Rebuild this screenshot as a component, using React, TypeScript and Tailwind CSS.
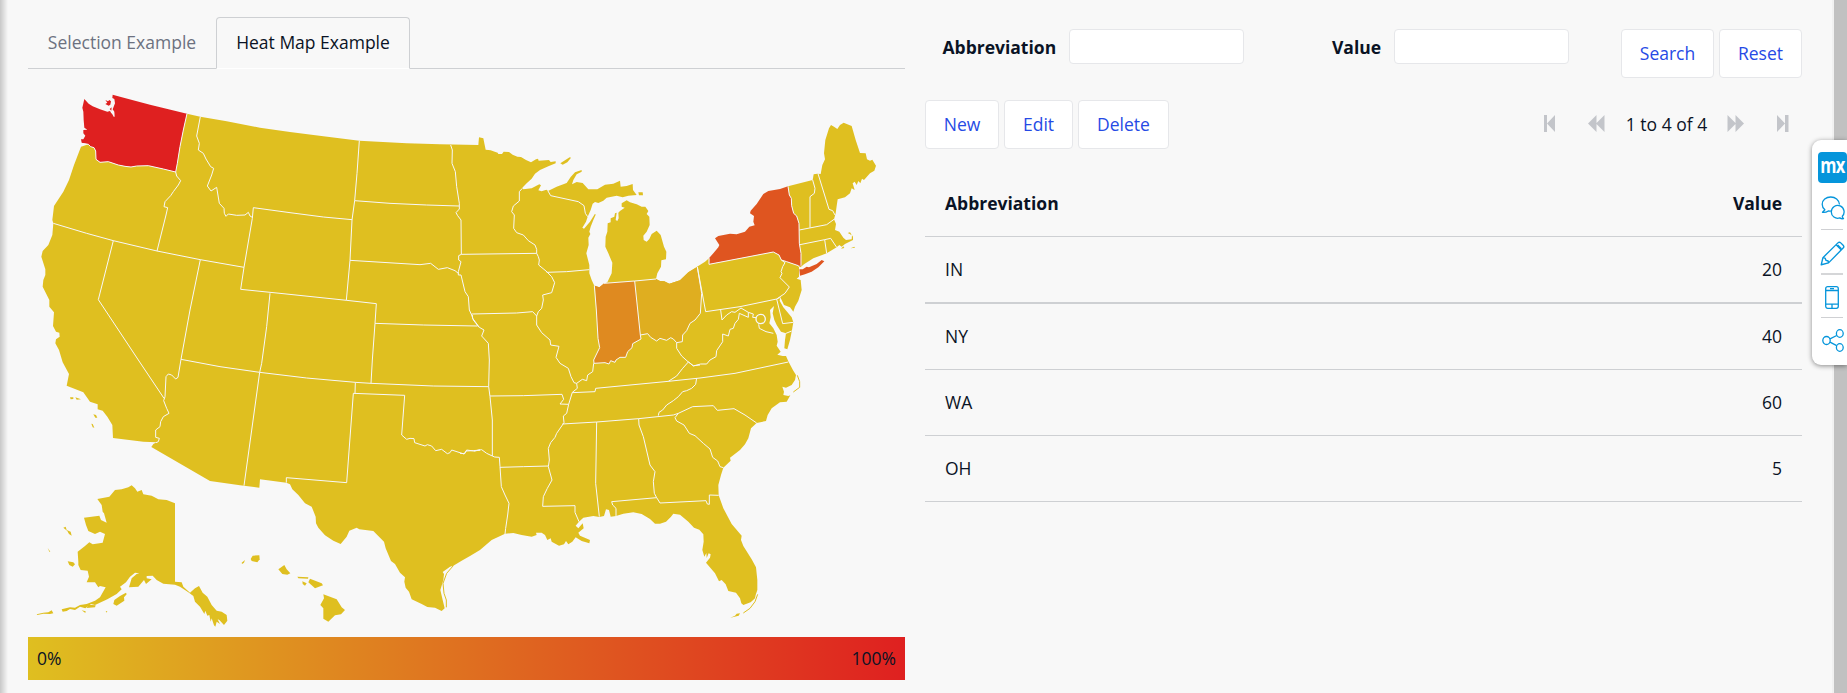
import React from "react";

/* Every map tile is 240x270 px; its points are written in thirds of a pixel. */
const at = (col: number, row: number, pts: string) =>
  pts
    .trim()
    .split(/\s+/)
    .map((p) => {
      const [x, y] = p.split(",").map(Number);
      return `${x + col * 660},${y + row * 810}`;
    })
    .join(" ");

const mainland = [
  at(0, 0, "501,101 541,110 620,124 720,143"),
  at(1, 0, "150,156 250,169 358,182 500,190 600,193 715,195"),
  at(
    2,
    0,
    `57,172 70,175 73,190 77,209 92,211 100,214 113,218 115,222 126,222 131,215 147,216 158,224 172,230 183,231 198,240 213,247 228,238 234,236 236,242 267,240 272,246 287,244 287,250 265,259 240,270 225,281 215,296 200,310 187,323 190,328 215,325 238,313 243,316 235,331 245,334 259,329 264,333
    290,320 320,309 332,291 345,277 365,270 365,275 350,283 340,300 336,313 350,306 368,309 385,328 412,328 435,314 460,311 480,302 482,320 500,318 518,312 519,330 530,345 505,347 488,352 470,347 440,353 430,362 415,369 405,366 398,371 392,390 383,410
    378,425 367,443 372,446 390,425 405,401 407,404 400,420 392,440 388,455 391,462 385,473 386,495 379,520 388,555 388,580 395,600 403,617 418,622 432,612 442,607 455,580 457,548 445,520 436,500 437,470 442,455 443,430 452,427 452,415 463,410 465,400 470,398 467,420 472,423 476,415 475,398 480,393 494,383 485,380 485,370 500,361 510,367 530,373 545,380 556,380 565,393 560,402 568,410 569,435 560,455 550,467 551,480 560,485 568,477 575,462 590,452 602,465 612,500 619,515 618,538 604,541 603,560 592,580 588,597 600,603 613,604 628,611 660,601 685,577`
  ),
  at(
    3,
    0,
    `50,561 75,545 87,535 87,553 280,516 297,525 304,540 355,557 363,557 363,520 358,490 357,430 350,408 341,400 335,377 334,355 328,345 324,319 398,300 401,283 412,281 422,282 427,255 435,238 432,220 436,180 447,145 453,135 462,140 472,147 480,135 491,128 515,138 527,180 540,219 557,220 561,238 570,242 577,239 588,257 583,272 570,280 552,300 546,296 541,310 535,303 530,315 524,305 518,310 524,330 515,325 510,340 495,352 473,358 470,378 467,400 462,418 468,432 465,450 478,455 490,473 498,480 515,478 516,465 503,459 510,457 519,470 519,480 495,492 485,500 478,495 470,502 440,520 400,535 372,553 363,560
    357,563 357,590 350,596 362,600 365,630 355,662 345,680 340,695 330,682 312,675 301,652 299,662 310,682 325,700 335,712 340,727 336,750 330,780 322,808 313,805 315,780 318,760 303,755 290,735 283,720 278,700 282,678 270,690 272,712 268,730 280,745 290,765 293,785 290,797 302,815 292,824 308,828`
  ),
  at(
    3,
    1,
    `318,18 326,36 340,62 348,75 345,90 335,105 318,113 307,110 312,125 310,135 325,138 331,136 320,155 300,157 275,175 263,195 258,213 230,219 213,235 205,265 195,283 180,300 150,323 152,332 130,353 123,375 115,405 116,436 130,475 155,522 185,557 183,570 190,588 215,628 228,652 232,690 232,720 227,735 225,745 212,757 190,765 184,760 180,745 168,728 145,723 137,703 125,690 117,694 105,670 78,638 90,623 92,613 86,610 80,624 79,609 73,620 67,600 71,575 70,553 58,539 42,533 25,515`
  ),
  at(
    2,
    1,
    `660,494 640,491 633,500 618,515 600,521 585,521 570,507 545,492 520,487 490,491 468,498 452,500 447,480 438,478 432,498 418,501 400,498 370,503 357,515 347,527 355,535 368,520 371,535 355,548 360,557 390,570 388,580 365,573 347,562 337,575 325,583 318,573 312,583 297,587 275,575 272,565 262,570 255,555 245,548 228,548 230,555 215,560 185,555 160,549 135,551 95,570 60,600`
  ),
  at(
    1,
    1,
    `690,618 665,632 640,647 630,650 608,666 612,672 610,690 601,720 608,750 614,775 605,783 585,773 562,771 545,762 515,748 507,725 497,713 493,695 495,682 480,668 465,642 453,633 437,595 432,575 400,543 358,538 350,533 328,542 320,560 302,582 280,572 255,556 235,533 228,520 227,500 215,470 195,460 175,435 157,418 150,403 139,398 60,388 58,413 0,406`
  ),
  at(
    0,
    1,
    `570,393 394,291 400,282 410,277 370,275 279,264 277,225 262,200 248,182 233,178 233,163 210,155 190,127 165,117 140,107 147,72 128,37 117,0`
  ),
  at(
    0,
    0,
    `106,790 108,778 119,770 118,758 108,755 99,738 102,697 88,680 88,660 68,620 70,600 76,585 76,568 64,530 68,513 85,495 97,465 100,430 97,420 102,378 130,335 147,300 162,255 183,200 205,193 212,200 222,203 227,213 228,238 240,247 265,245 295,255 315,259 333,261 350,258 385,257 430,267 467,276 472,250 480,200 490,150`
  ),
].join(" ");

const islands = [
  // Alaska
  at(
    0,
    1,
    `335,406 345,415 352,425 365,420 370,433 395,437 415,448 440,450 465,460 465,695 485,697 490,710 510,728 525,715 537,708 548,728 562,740 575,765 590,782 605,785 620,795 622,812 612,825 598,810 593,808 600,822 590,815 586,830 582,826 575,805 572,815 568,795 562,797 556,782 553,792 540,770 525,755 520,738 505,727 480,710 465,704 430,701 410,690 398,677 380,678 380,685 395,688 378,702 372,690 355,710 327,712 335,685 350,672 358,670 345,668 330,680 318,697 300,710 305,718 290,732 262,748 225,765 213,762 196,775 180,770 165,780 150,777 140,783 128,785 125,778 150,772 165,773 180,765 200,762 225,752 240,742 257,712 240,708 235,712 225,697 200,697 207,680 203,662 182,660 175,645 175,635 173,605 195,588 208,577 218,583 248,578 255,552 240,545 225,552 205,543 198,525 192,503 215,500 238,497 243,510 260,518 252,490 248,485 245,465 232,447 268,440 285,420 305,418 325,412`
  ),
  at(0, 1, "283,750 300,738 318,728 320,733 312,742 313,752 290,767 280,762"),
  at(0, 1, "130,533 137,530 140,540 152,545 155,557 147,552 142,543"),
  at(0, 1, "83,594 91,605 88,605"),
  at(0, 1, "143,634 160,637 165,643 158,650 148,645"),
  at(0, 1, "50,793 70,788 85,787 95,781 100,790 90,792 70,791 52,795"),
  at(0, 1, "185,781 197,784 196,789"),
  at(0, 1, "205,764 227,766 225,772 200,774"),
  at(0, 1, "257,783 262,784 260,788"),
  // California
  at(0, 1, "150,142 160,142 160,147 152,148"),
  at(0, 1, "166,142 183,148 170,149"),
  at(0, 1, "220,193 228,195 232,203 226,203"),
  at(0, 1, "214,221 218,222 223,233 218,232"),
  // Hawaii
  at(1, 1, "32,627 38,617 58,616 59,628 52,637 35,633"),
  at(1, 1, "5,638 15,630 12,638 6,642"),
  at(1, 1, "115,658 133,645 140,658 151,670 142,674 127,672"),
  at(1, 1, "172,680 205,682 204,686 175,685"),
  at(1, 1, "187,694 200,700 195,707 188,702"),
  at(1, 1, "210,686 245,700 249,706 225,715 205,697"),
  at(1, 1, "250,733 290,748 305,772 315,780 303,793 285,796 265,815 250,806 250,775 241,765 252,745"),
  // Great Lakes
  at(2, 0, "301,250 329,232 333,233 322,247 308,254"),
  at(2, 0, "535,337 548,337 549,346 537,346"),
  // Florida and New England
  at(3, 1, "151,803 165,797 170,791 180,790 176,797"),
  at(3, 0, "483,506 490,499 493,504"),
  at(3, 0, "512,505 523,500 525,503"),
];

const sandbars = [
  at(3, 1, "352,76 359,95 359,112 340,126"),
  at(1, 1, "640,647 620,670 609,700 612,730 619,750 619,772"),
  at(3, 1, "233,733 225,755 210,775 190,789"),
];

const washington = [
  at(
    0,
    0,
    `193,57 206,71 218,79 240,88 262,95 270,93 273,98 277,103 281,110 284,110 283,95 278,88 281,80 285,70 283,57 277,54 278,44 300,50 390,74 501,101 490,150 480,200 472,250 467,276 430,267 385,257 350,258 333,261 315,259 295,255 265,245 240,247 228,238 227,213 222,203 212,200 205,193 190,190 185,188 183,178 190,178 196,167 190,160 190,150 202,149 193,143 191,120 190,95 187,83`
  ),
  at(0, 0, "256,60 264,64 268,60 273,64 271,74 266,77 256,72 262,68"),
  at(0, 0, "269,87 275,82 274,92"),
];

const newYork = [
  at(
    3,
    0,
    `87,553 88,533 100,520 115,502 118,495 105,475 115,468 150,461 170,463 195,455 208,440 224,436 220,425 222,408 210,400 212,392 230,372 250,342 265,333 300,327 324,319 328,345 334,355 335,377 341,400 350,408 357,430 358,490 363,520 364,557 355,557 320,545 304,540 297,525 280,516`
  ),
  at(3, 0, "360,587 358,568 368,568 380,560 387,562 410,552 425,540 433,544 415,562 395,575 375,583"),
];

const indiana = [
  at(
    2,
    0,
    `405,617 418,622 432,610 524,603 543,777 525,787 518,791 516,803 503,815 497,832 480,832 468,840 465,847 452,842 447,852 435,848 402,850 401,840 419,803 414,775`
  ),
];

const ohio = [
  at(
    2,
    0,
    `524,603 588,597 600,603 613,604 628,611 660,601 685,577 712,561 725,640 721,700 705,720 690,730 680,752 668,765 667,785 650,788 640,777 632,773 620,781 600,775 590,783 572,772 563,761 541,765`
  ),
];

const borders = [
  at(0, 0, "467,276 470,288 482,302 475,315 460,335 452,347 435,365 432,380 443,383 438,405 411,513"),
  at(0, 0, "541,110 530,168 538,190 535,210 550,220 558,237 572,260 581,265 575,285 562,318 573,333 590,322 598,370 612,385 613,400 618,409 625,402 650,406 675,405 685,397 690,408 697,412"),
  at(0, 0, "100,430 200,460 280,482 411,513 541,539 672,562"),
  at(0, 0, "280,482 235,659 355,840 432,955"),
  at(0, 0, "541,539 510,690 483,838 474,892"),
  at(1, 0, "336,419 250,411 150,398 40,383 37,415 12,562 2,628 120,640 320,661 409,671"),
  at(1, 0, "358,182 351,280 344,362 336,420 330,541 319,661"),
  at(1, 0, "344,362 450,370 560,375 657,378"),
  at(1, 0, "632,195 637,210 636,250 646,275 650,320 658,370 658,387 648,398 653,407 663,420 664,523 656,527 656,540 663,545 655,575 655,585 663,585 675,635 685,650 688,690 695,705 700,720 717,742"),
  at(1, 0, "330,541 540,554 572,550 595,568 622,563 645,572 655,580"),
  at(1, 0, "664,523 890,520"),
  at(1, 0, "405,730 550,735 712,738"),
  at(1, 0, "409,671 405,730 397,840 393,910"),
  at(1, 0, "90,640 80,740 65,850 59,877 12,1217"),
  at(2, 0, "35,702 170,699 218,695 230,708"),
  at(
    2,
    0,
    `187,325 178,335 178,363 160,378 155,395 163,405 161,445 170,458 190,465 205,482 225,495 230,508 230,520 235,530 238,540 236,555 258,573 275,590 284,608 275,638 248,645 250,660 245,685 235,695 230,708 230,735 245,758 270,780 272,795 297,799 288,832`
  ),
  at(2, 0, "264,333 272,347 355,365 372,377 376,400 383,410"),
  at(2, 0, "260,577 320,575 388,569"),
  at(2, 0, "37,705 38,715 58,742 72,750 65,768 85,790 88,840 86,920 90,950 97,1020 97,1128"),
  at(2, 0, "650,788 650,805 665,828 685,846 700,857 720,855"),
  at(3, 0, "52,561 77,695 180,680 290,657 301,652"),
  at(3, 0, "304,540 315,548 308,560 303,575 306,580 300,593 310,603 328,621 315,640 290,657"),
  at(3, 0, "290,657 308,731 340,727"),
  at(3, 0, "398,300 405,325 403,340 390,350 390,443"),
  at(3, 0, "414,281 447,388 458,392 465,405"),
  at(3, 0, "358,450 440,434 462,418"),
  at(3, 0, "360,494 434,479 452,475 470,502"),
  at(3, 0, "434,479 440,520"),
  at(3, 0, "122,690 126,720 140,705 155,695 165,697 183,684 205,697 220,702 218,712 228,713"),
  at(3, 0, "236,733 238,745 258,755 280,760"),
  at(3, 0, "205,697 205,712 178,700 175,718 165,730 160,745 150,748 145,768 128,762 128,785 110,812 108,830 90,840 80,852 62,852 40,858 25,845"),
  at(3, 0, "318,760 335,753"),
  at(0, 1, "483,28 600,50 719,67 860,84 1006,97 1053,100 1240,108 1406,110"),
  at(0, 1, "474,82 467,87 455,75 445,72 438,80 435,140 431,152 440,175 447,190 430,200 422,215 420,230 407,240 407,262 418,265 415,275 408,278"),
  at(1, 1, "346,97 345,130"),
  at(1, 1, "139,398 139,383 320,398 340,130 494,136 485,255 500,268 510,265 522,266 524,278 555,288 562,284 575,288 587,302 605,298 622,311 630,308 635,300 672,312 678,303 700,302 720,300"),
  at(2, 1, "42,303 65,299 80,310 97,318 104,321 118,322 120,350 124,410 135,435 147,460 143,495 137,535 135,552"),
  at(2, 1, "120,352 190,350 265,348"),
  at(2, 1, "60,300 42,303 20,300 14,311 0,310"),
  at(2, 1, "90,138 190,137 306,133 311,148 300,162 326,163"),
  at(
    2,
    1,
    `288,22 300,40 325,55 333,80 342,98 350,100 352,115 337,127 326,163 320,190 310,198 312,218 290,250 285,262 272,278 265,295 268,330 265,350 276,390 262,415 250,440 248,469 345,467 345,487 357,515`
  ),
  at(2, 1, "401,40 398,65 383,75 380,92 367,88 350,100"),
  at(2, 1, "337,128 405,125 407,115 625,94 720,84 825,70 985,36"),
  at(2, 1, "685,36 668,55 650,78 625,94"),
  at(2, 1, "710,84 707,103 695,115 680,122 668,125 655,140 640,152 620,165 608,180 597,187 595,197"),
  at(2, 1, "307,222 410,216 536,206 640,195 655,190 698,170 760,167 772,181 822,176 855,195 890,219"),
  at(2, 1, "655,190 645,203 650,213 672,225 688,250 705,257 730,280 750,297 758,322 773,333 780,350 790,353"),
  at(2, 1, "410,216 407,400 418,500"),
  at(2, 1, "536,206 537,225 550,260 570,345 585,365 580,395 583,430 590,443 600,459 738,452 742,462 748,463 748,435 776,436"),
  at(2, 1, "590,443 455,455 458,465 468,475 468,498"),
];

const Shapes = ({ list, className }: { list: string[]; className: string }) => (
  <g className={className}>
    {list.map((points, i) => (
      <polygon key={i} points={points} />
    ))}
  </g>
);

const UsMap = () => (
  <svg viewBox="24 0 2631 1671" className="block h-[557px] w-[877px]" role="img" aria-label="US heat map">
    <polygon points={mainland} className="fill-[#dfbf20]" />
    <Shapes list={islands} className="fill-[#dfbf20]" />
    <g className="fill-none stroke-[#dfbf20] stroke-[3]">
      {sandbars.map((points, i) => (
        <polyline key={i} points={points} />
      ))}
    </g>
    <Shapes list={washington} className="fill-[#df2020]" />
    <Shapes list={newYork} className="fill-[#df5520]" />
    <Shapes list={indiana} className="fill-[#df8a20]" />
    <Shapes list={ohio} className="fill-[#dfae20]" />
    <g className="fill-none stroke-[#f8f8f8] stroke-[3]" strokeLinejoin="round">
      {borders.map((points, i) => (
        <polyline key={i} points={points} />
      ))}
      <polyline points={at(0, 0, "185,190 205,193 212,200 222,203 227,213 228,238 240,247 265,245 295,255 315,259 333,261 350,258 385,257 430,267 467,276 472,250 480,200 490,150 501,101")} />
      <polyline points={at(3, 0, "87,535 87,553 280,516 297,525 304,540 320,545 355,557 361,566")} />
      <polyline points={at(3, 0, "363,557 363,520 358,490 357,430 350,408 341,400 335,377 334,355 328,345 324,319")} />
      <polyline points={at(2, 0, "403,617 409,690 414,775 419,803 401,840 402,850 435,848 447,852 452,842 465,847 468,840 480,832 497,832 503,815 516,803 518,791 543,777 541,765 524,603")} />
      <polyline points={at(2, 0, "432,610 524,603 588,597")} />
      <polyline points={at(2, 0, "541,765 563,761 572,772 590,783 600,775 620,781 632,773 640,777 650,788 667,785 668,765 680,752 690,730 705,720 721,700 725,640 712,561")} />
      <circle cx="2222" cy="717" r="14" className="stroke-[4]" />
    </g>
  </svg>
);

const Button = ({ children, className }: { children: React.ReactNode; className: string }) => (
  <button className={`h-[49px] rounded-[4px] border border-[#e6e7ea] bg-white pb-[2px] text-[#264ae5] ${className}`}>
    {children}
  </button>
);

const rows = [
  { abbreviation: "IN", value: 20 },
  { abbreviation: "NY", value: 40 },
  { abbreviation: "WA", value: 60 },
  { abbreviation: "OH", value: 5 },
];

const Pager = () => (
  <div className="flex h-[49px] items-center text-[#c3c5ca]">
    <svg viewBox="0 0 11 17" className="-mt-[2px] h-[17px] w-[11px] fill-current">
      <path d="M0 0h3v17H0zM11 0v17L3 8.500z" />
    </svg>
    <svg viewBox="0 0 17 17" className="-mt-[2px] ml-[33px] h-[17px] w-[17px] fill-current">
      <path d="M8.500 0v17L0 8.500zM16.500 0v17L8 8.500z" />
    </svg>
    <span className="ml-[20px] w-[83px] pb-[2px] text-center whitespace-nowrap text-[#0a1325]">1 to 4 of 4</span>
    <svg viewBox="0 0 17 17" className="-mt-[2px] ml-[19px] h-[17px] w-[17px] fill-current">
      <path d="M.5 0v17L9 8.500zM8.500 0v17l8.500-8.500z" />
    </svg>
    <svg viewBox="0 0 12 17" className="-mt-[2px] mr-[13px] ml-[33px] h-[17px] w-[12px] fill-current">
      <path d="M0 0v17l8-8.500zM8 0h3.500v17H8z" />
    </svg>
  </div>
);

const Toolbar = () => (
  <aside className="absolute top-[140px] right-0 flex h-[225px] w-[35px] flex-col items-start overflow-visible rounded-l-[9px] bg-white pt-[12px] pl-[6px] shadow-[0_1px_5px_rgba(0,0,0,0.45)]">
    <div className="flex h-[31px] w-[29px] items-center justify-center rounded-[4px] bg-[#0595db]">
      <span className="-mt-[5px] scale-y-[1.300] text-[16.500px] leading-none font-bold tracking-[-0.500px] text-white">mx</span>
    </div>
    <div className="flex w-full flex-col fill-none stroke-[#0595db] stroke-[1.300]">
      <svg viewBox="0 0 24 24" className="mt-[13px] ml-[3px] h-[24px] w-[24px]" strokeLinejoin="round">
        <path d="M18.500 8.500C18 4 14.300 1 9.800 1 5 1 1.200 4.200 1.200 8.300c0 2.300 1 4.200 2.700 5.500L1.500 16.300c2.200.2 4.300-.3 5.800-1.400.8.200 1.700.2 2.500.100" />
        <path d="M21.300 20.300a6.400 6.400 0 1 0-2.500 1.600c1 .7 2.500 1 3.700.7-.7-.6-1-1.400-1.200-2.300z" />
      </svg>
      <span className="mt-[9px] ml-[3px] h-px w-[22px] bg-[#cfd0d3]" />
      <svg viewBox="0 0 24 24" className="mt-[11px] ml-[2px] h-[25px] w-[25px]" strokeLinejoin="round">
        <path d="M1.200 22.800 2.800 16 17.200 1.800c.8-.8 1.900-.8 2.700 0l2.300 2.300c.8.800.8 1.900 0 2.700L8.200 21zM2.800 16l2 .4 1 2.200 2 .6.4 1.800M15.500 3.600l5 5M17 3.800l3.500 3.500" />
      </svg>
      <span className="mt-[7px] ml-[3px] h-[2px] w-[22px] bg-[#d5d6d8]" />
      <svg viewBox="0 0 14 23" className="mt-[11px] ml-[7px] h-[23px] w-[14px]">
        <rect x=".7" y=".7" width="12.600" height="21.600" rx="2" />
        <path d="M1 4.500h12M1 18.200h12M5 2.600h4M7 18.200v4" />
      </svg>
      <span className="mt-[8px] ml-[3px] h-px w-[22px] bg-[#cfd0d3]" />
      <svg viewBox="0 0 23 23" className="mt-[11px] ml-[4px] h-[23px] w-[23px]">
        <ellipse cx="4.500" cy="11.500" rx="3.700" ry="4" />
        <ellipse cx="17.800" cy="4.500" rx="3.400" ry="3.800" />
        <ellipse cx="17.800" cy="18.500" rx="3.400" ry="3.800" />
        <path d="M8 9.900l6.700-3.400M8 13.200l6.700 3.500" />
      </svg>
    </div>
  </aside>
);

export default function App() {
  return (
    <div className="relative flex h-[693px] w-full overflow-hidden bg-[#f8f8f8] font-['Open_Sans','Noto_Sans',sans-serif] text-[17.500px] leading-[24px] font-normal text-[#0a1325]">
      <div className="w-[8px] shrink-0 bg-linear-to-r/srgb from-[#c8c8c8] to-[#f8f8f8]" />

      <main className="flex flex-1 gap-[20px] pl-[20px]">
        <section className="w-[877px] pt-[17px]">
          <div className="flex h-[52px] border-b border-[#ced0d3]">
            <div className="flex w-[188px] items-center justify-center pb-[1px] text-[#6c7180]">
              Selection Example
            </div>
            <div className="-mb-px flex h-[52px] w-[194px] items-center justify-center rounded-t-[4px] border border-[#ced0d3] border-b-white bg-[#f8f8f8] pb-[2px]">
              Heat Map Example
            </div>
          </div>
          <div className="pt-[11px]">
            <UsMap />
          </div>
          <div className="flex h-[43px] items-center justify-between bg-linear-to-r/srgb from-[#dfbf20] to-[#df2020] px-[9px] pb-[2px]">
            <span>0%</span>
            <span>100%</span>
          </div>
        </section>

        <section className="w-[877px] pt-[29px]">
          <div className="flex h-[49px] items-start">
            <label className="ml-[17.500px] w-[126.500px] pt-[6px] font-bold">Abbreviation</label>
            <input className="h-[35px] w-[175px] rounded-[4px] border border-[#e6e7ea] bg-white" />
            <label className="ml-[88px] w-[62px] pt-[6px] font-bold">Value</label>
            <input className="h-[35px] w-[175px] rounded-[4px] border border-[#e6e7ea] bg-white" />
            <div className="ml-auto flex gap-[5px]">
              <Button className="w-[93px]">Search</Button>
              <Button className="w-[83px]">Reset</Button>
            </div>
          </div>

          <div className="mt-[22px] flex items-center justify-between">
            <div className="flex gap-[5px]">
              <Button className="w-[74px]">New</Button>
              <Button className="w-[69px]">Edit</Button>
              <Button className="w-[91px]">Delete</Button>
            </div>
            <Pager />
          </div>

          <div className="mt-[21px]">
            <div className="flex h-[67px] items-center justify-between border-b border-[#ced0d3] px-[20px] font-bold">
              <span>Abbreviation</span>
              <span>Value</span>
            </div>
            {rows.map((row, i) => (
              <div
                key={row.abbreviation}
                className={`flex items-center justify-between border-[#ced0d3] px-[20px] pb-[2px] ${
                  i === 0 ? "h-[67px] border-b-2" : "h-[66px] border-b"
                }`}
              >
                <span>{row.abbreviation}</span>
                <span>{row.value}</span>
              </div>
            ))}
          </div>
        </section>
      </main>

      <div className="w-[15px] shrink-0 border-l-2 border-[#f1f1f1] bg-[#c1c1c1]" />
      <Toolbar />
    </div>
  );
}
